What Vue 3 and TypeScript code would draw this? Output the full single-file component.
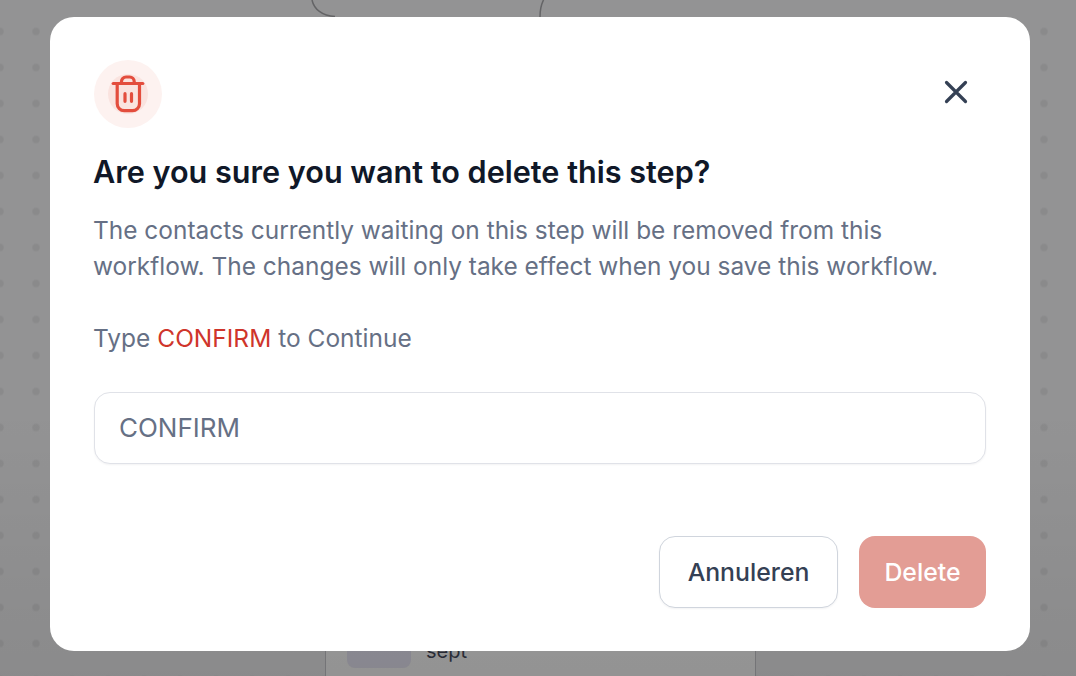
<template>
  <div class="canvas">
    <!-- workflow canvas behind the dialog -->
    <svg class="connectors" width="1076" height="30" viewBox="0 0 1076 30" fill="none">
      <path d="M312 0C314 9 322 16 335 16.5" />
      <path d="M540 17C540 10 541 5 543.5 0" />
    </svg>
    <div class="step-card">
      <div class="step-row">
        <span class="step-thumb"></span>
        <span class="step-date">sept</span>
      </div>
    </div>

    <div class="overlay">
      <div class="modal">
        <div class="modal-top">
          <div class="icon-ring">
            <div class="icon-inner">
              <svg class="trash" width="36" height="40" viewBox="0 -0.5 36 40" fill="none" stroke="#e34d3d" stroke-width="3.2" stroke-linecap="round" stroke-linejoin="round">
                <path d="M3.2 9h29.6" />
                <path d="M7.2 9v20.2a7 7 0 0 0 7 7h8.3a7 7 0 0 0 7-7V9" />
                <path d="M11.5 9V7a4.5 4.5 0 0 1 4.5-4.5h3.7A4.5 4.5 0 0 1 24.2 7v2" />
                <path d="M15 19.2v7.6M21.5 19.2v7.6" />
              </svg>
            </div>
          </div>
          <button class="close-btn" type="button" aria-label="Close">
            <svg width="24" height="24" viewBox="0 0 24 24" fill="none" stroke="#344054" stroke-width="3.2" stroke-linecap="round">
              <path d="M2.5 2.5l19 19M21.5 2.5l-19 19" />
            </svg>
          </button>
        </div>

        <h2 class="modal-title">{{ title }}</h2>
        <p class="modal-text">{{ description }}</p>
        <p class="confirm-label">Type <span class="confirm-word">CONFIRM</span> to Continue</p>
        <input class="confirm-input" type="text" v-model="typed" />

        <div class="modal-actions">
          <button class="btn btn-cancel" type="button">Annuleren</button>
          <button class="btn btn-delete" type="button">Delete</button>
        </div>
      </div>
    </div>
  </div>
</template>

<script setup lang="ts">
import { ref } from 'vue';

const title = 'Are you sure you want to delete this step?';
const description =
  'The contacts currently waiting on this step will be removed from this workflow. The changes will only take effect when you save this workflow.';

const typed = ref('CONFIRM');
</script>

<style scoped>
.canvas {
  position: relative;
  width: 1076px;
  height: 676px;
  overflow: hidden;
  font-family: Inter, "Liberation Sans", sans-serif;
  background-color: #939394;
  background-image: radial-gradient(circle at center, #8a8a8b 0, #8a8a8b 3px, transparent 4.5px);
  background-size: 36px 36px;
  background-position: -18px 13.5px;
}

.connectors {
  position: absolute;
  top: 0;
  left: 0;
}

.connectors path {
  stroke: #646466;
  stroke-width: 1.5;
}

.step-card {
  position: absolute;
  left: 325px;
  top: 560px;
  width: 431px;
  height: 130px;
  box-sizing: border-box;
  border-left: 1px solid #7b7b7e;
  border-right: 1px solid #7b7b7e;
  background: #9c9c9c;
  padding: 70px 0 0 21px;
}

.step-row {
  display: flex;
  align-items: flex-start;
  gap: 15px;
}

.step-thumb {
  width: 64px;
  height: 38px;
  border-radius: 8px;
  background: #908f98;
}

.step-date {
  font-size: 20px;
  line-height: 24px;
  color: #2c2f3a;
  margin-top: 9px;
}

.overlay {
  position: relative;
  height: 100%;
  display: flex;
  align-items: flex-start;
  padding: 17px 0 0 50px;
  box-sizing: border-box;
  background: linear-gradient(180deg, rgba(0, 0, 0, 0) 60%, rgba(0, 0, 0, 0.06) 100%);
}

.modal {
  width: 980px;
  height: 634px;
  box-sizing: border-box;
  padding: 43px 44px;
  background: #fff;
  border-radius: 24px;
  display: flex;
  flex-direction: column;
}

.modal-top {
  display: flex;
  justify-content: space-between;
  align-items: flex-start;
}

.icon-ring {
  width: 68px;
  height: 68px;
  border-radius: 50%;
  background: #fdf2f0;
  display: flex;
  align-items: center;
  justify-content: center;
}

.icon-inner {
  width: 40px;
  height: 40px;
  border-radius: 50%;
  background: #fae3df;
  display: flex;
  align-items: center;
  justify-content: center;
}

.trash {
  flex-shrink: 0;
}

.close-btn {
  border: 0;
  background: none;
  padding: 0;
  margin: 20px 18px 0 0;
  width: 24px;
  height: 24px;
  cursor: pointer;
}

.modal-title {
  margin: 25px 0 0 -1px;
  font-size: 30.6px;
  line-height: 38px;
  font-weight: 600;
  color: #101828;
}

.modal-text {
  margin: 21px 0 0 -1px;
  font-size: 24.45px;
  line-height: 36px;
  font-weight: 400;
  color: #667085;
}

.confirm-label {
  margin: 36px 0 0 -1px;
  font-size: 24.5px;
  line-height: 36px;
  color: #667085;
}

.confirm-word {
  color: #cf352b;
}

.confirm-input {
  margin-top: 36px;
  height: 72px;
  width: 100%;
  box-sizing: border-box;
  padding: 0 24px 2px;
  border: 1px solid #e0e2e8;
  border-radius: 16px;
  background: #fff;
  box-shadow: 0 1px 2px rgba(16, 24, 40, 0.05);
  font-family: inherit;
  font-size: 26px;
  color: #667085;
  outline: none;
}

.modal-actions {
  margin-top: auto;
  display: flex;
  justify-content: flex-end;
  gap: 21px;
}

.btn {
  height: 72px;
  box-sizing: border-box;
  border-radius: 16px;
  font-family: inherit;
  font-size: 24.8px;
  font-weight: 500;
  cursor: pointer;
}

.btn-cancel {
  width: 179px;
  background: #fff;
  border: 1px solid #d0d5dd;
  color: #344054;
  box-shadow: 0 1px 2px rgba(16, 24, 40, 0.05);
}

.btn-delete {
  width: 127px;
  background: #e39d95;
  border: 0;
  color: #fff;
}
</style>
